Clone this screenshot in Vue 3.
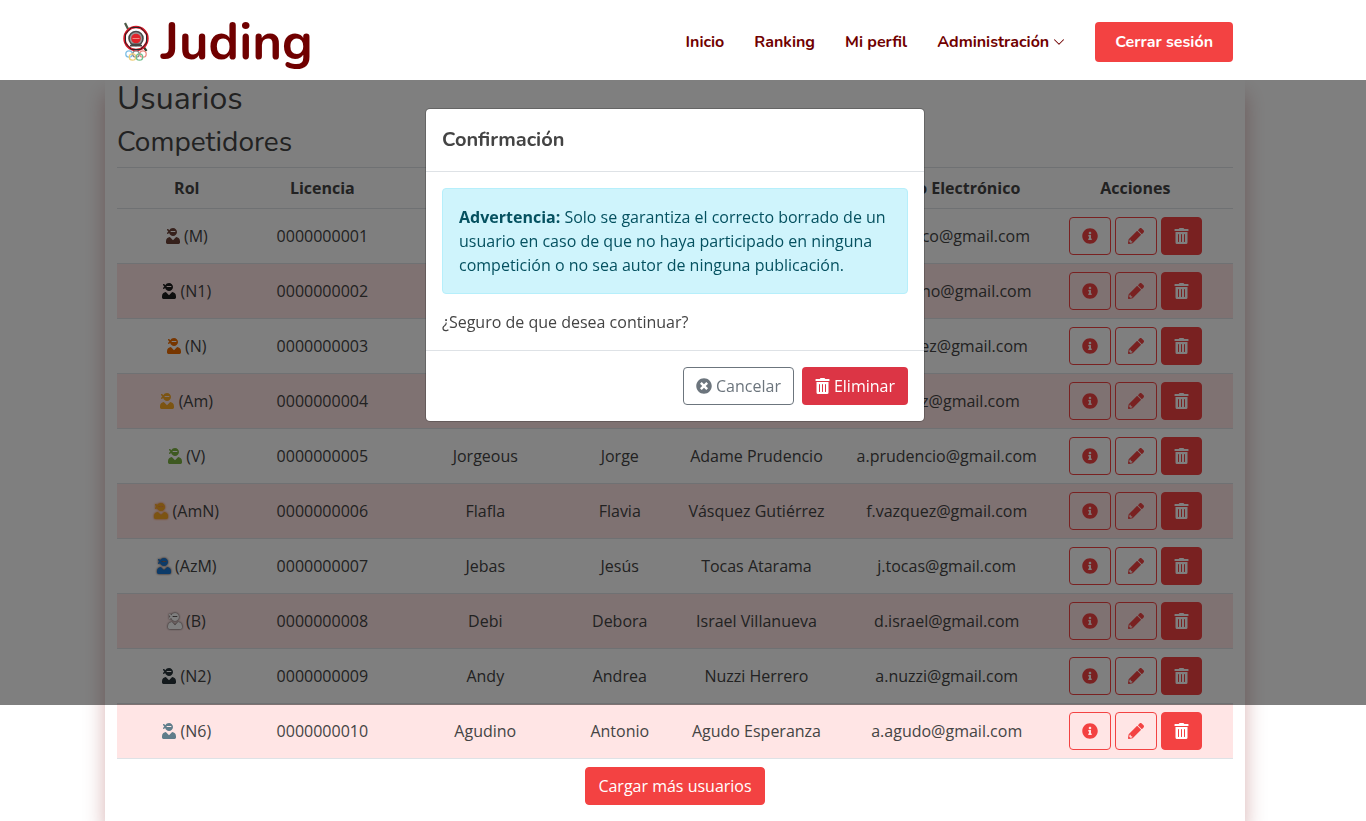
<script setup>
const icons = {
  ninja: {
    box: '0 0 448 512',
    d: 'M325.4 289.2L224 390.6 122.6 289.2C54 295.3 0 352.2 0 422.4v44.8C0 491.9 20.1 512 44.8 512h358.4c24.7 0 44.8-20.1 44.8-44.8v-44.8c0-70.2-54-127.1-122.6-133.2zM32 192c27.3 0 51.8-11.5 69.2-29.7 15.1 53.9 64 93.7 122.8 93.7 70.7 0 128-57.3 128-128S294.7 0 224 0c-50.4 0-93.6 29.4-114.5 71.8C92.1 47.8 64 32 32 32c0 33.4 17.1 62.8 43.1 80-26 17.2-43.1 46.6-43.1 80zm144-96h96c17.7 0 32 14.3 32 32H144c0-17.7 14.3-32 32-32z'
  },
  info: {
    box: '0 0 512 512',
    d: 'M256 8C119.043 8 8 119.083 8 256c0 136.997 111.043 248 248 248s248-111.003 248-248C504 119.083 392.957 8 256 8zm0 110c23.196 0 42 18.804 42 42s-18.804 42-42 42-42-18.804-42-42 18.804-42 42-42zm56 254c0 6.627-5.373 12-12 12h-88c-6.627 0-12-5.373-12-12v-24c0-6.627 5.373-12 12-12h12v-64h-12c-6.627 0-12-5.373-12-12v-24c0-6.627 5.373-12 12-12h64c6.627 0 12 5.373 12 12v100h12c6.627 0 12 5.373 12 12v24z'
  },
  pencil: {
    box: '0 0 512 512',
    d: 'M497.9 142.1l-46.1 46.1c-4.7 4.7-12.3 4.7-17 0l-111-111c-4.7-4.7-4.7-12.3 0-17l46.1-46.1c18.7-18.7 49.1-18.7 67.9 0l60.1 60.1c18.8 18.7 18.8 49.1 0 67.9zM284.2 99.8L21.6 362.4.4 483.9c-2.9 16.4 11.4 30.6 27.8 27.8l121.5-21.3 262.6-262.6c4.7-4.7 4.7-12.3 0-17l-111-111c-4.8-4.7-12.4-4.7-17.1 0zM88 424h48v36.3l-64.5 11.3-31.1-31.1L51.7 376H88v48z'
  },
  trash: {
    box: '0 0 448 512',
    d: 'M32 464a48 48 0 0 0 48 48h288a48 48 0 0 0 48-48V128H32zm272-256a16 16 0 0 1 32 0v224a16 16 0 0 1-32 0zm-96 0a16 16 0 0 1 32 0v224a16 16 0 0 1-32 0zm-96 0a16 16 0 0 1 32 0v224a16 16 0 0 1-32 0zM432 32H312l-9.4-18.7A24 24 0 0 0 281.1 0H166.8a23.72 23.72 0 0 0-21.4 13.3L136 32H16A16 16 0 0 0 0 48v32a16 16 0 0 0 16 16h416a16 16 0 0 0 16-16V48a16 16 0 0 0-16-16z'
  },
  cancel: {
    box: '0 0 512 512',
    d: 'M256 8C119 8 8 119 8 256s111 248 248 248 248-111 248-248S393 8 256 8zm121.6 313.1c4.7 4.7 4.7 12.3 0 17L338 377.6c-4.7 4.7-12.3 4.7-17 0L256 312l-65.1 65.6c-4.7 4.7-12.3 4.7-17 0L134.4 338c-4.7-4.7-4.7-12.3 0-17l65.6-65-65.6-65.1c-4.7-4.7-4.7-12.3 0-17l39.6-39.6c4.7-4.7 12.3-4.7 17 0l65 65.7 65.1-65.6c4.7-4.7 12.3-4.7 17 0l39.6 39.6c4.7 4.7 4.7 12.3 0 17L312 256l65.6 65.1z'
  }
}

const columns = ['Rol', 'Licencia', 'Apodo', 'Nombre', 'Apellidos', 'Correo Electrónico', 'Acciones']

const users = [
  { belt: 'brown', role: 'M', license: '0000000001', nick: 'Fran', name: 'Ana', surname: 'Pacheco Ruiz', email: 'a.pacheco@gmail.com' },
  { belt: 'black', role: 'N1', license: '0000000002', nick: 'Lucho', name: 'Mario', surname: 'Moreno Gil', email: 'm.moreno@gmail.com' },
  { belt: 'orange', role: 'N', license: '0000000003', nick: 'Albi', name: 'Alba', surname: 'Jiménez Sanz', email: 'a.jimenez@gmail.com' },
  { belt: 'yellow', role: 'Am', license: '0000000004', nick: 'Alex', name: 'Alex', surname: 'Pérez Díaz', email: 'a.perez@gmail.com' },
  { belt: 'green', role: 'V', license: '0000000005', nick: 'Jorgeous', name: 'Jorge', surname: 'Adame Prudencio', email: 'a.prudencio@gmail.com' },
  { belt: 'yellow-orange', role: 'AmN', license: '0000000006', nick: 'Flafla', name: 'Flavia', surname: 'Vásquez Gutiérrez', email: 'f.vazquez@gmail.com' },
  { belt: 'blue-brown', role: 'AzM', license: '0000000007', nick: 'Jebas', name: 'Jesús', surname: 'Tocas Atarama', email: 'j.tocas@gmail.com' },
  { belt: 'white', role: 'B', license: '0000000008', nick: 'Debi', name: 'Debora', surname: 'Israel Villanueva', email: 'd.israel@gmail.com' },
  { belt: 'dark', role: 'N2', license: '0000000009', nick: 'Andy', name: 'Andrea', surname: 'Nuzzi Herrero', email: 'a.nuzzi@gmail.com' },
  { belt: 'steel', role: 'N6', license: '0000000010', nick: 'Agudino', name: 'Antonio', surname: 'Agudo Esperanza', email: 'a.agudo@gmail.com' }
]
</script>

<template>
  <div class="page">
    <header class="header">
      <div class="header-inner">
        <a class="brand" href="#">
          <svg class="emblem" viewBox="0 0 28 40" aria-hidden="true">
            <path d="M3 1l3 6" stroke="#4d5a48" stroke-width="2.2" />
            <path d="M21 24l3.500 5" stroke="#33402f" stroke-width="2.2" />
            <circle cx="14" cy="16.500" r="11.500" fill="#fff" stroke="#d01625" stroke-width="2.400" />
            <path d="M9.500 5.500h9l6 6.500v9l-6 6.500h-9L3.500 21v-9z" fill="none" stroke="#2b2426" stroke-width="1" />
            <circle cx="14" cy="16.500" r="7" fill="#999" stroke="#4a4a4a" stroke-width="1.600" />
            <circle cx="14" cy="16.500" r="4.800" fill="#e0242a" />
            <path d="M10.500 16.500h7" stroke="#f4877e" stroke-width="1" />
            <path d="M8 23l3-1.500h6l3 1.500v1.500H8z" fill="#444" />
            <g fill="none" stroke-width="1.300">
              <circle cx="7" cy="32" r="3.200" stroke="#7fbfe6" />
              <circle cx="14" cy="32" r="3.200" stroke="#8a8a8a" />
              <circle cx="21" cy="32" r="3.200" stroke="#ee8c84" />
              <circle cx="10.500" cy="35" r="3.200" stroke="#efcf7a" />
              <circle cx="17.500" cy="35" r="3.200" stroke="#6fbd8c" />
            </g>
          </svg>
          <span>Juding</span>
        </a>
        <nav class="nav">
          <a href="#">Inicio</a>
          <a href="#">Ranking</a>
          <a href="#">Mi perfil</a>
          <a href="#">
            Administración
            <svg class="chevron" viewBox="0 0 16 16" aria-hidden="true">
              <path d="M2 5l6 6 6-6" fill="none" stroke="currentColor" stroke-width="1.400" stroke-linecap="round" stroke-linejoin="round" />
            </svg>
          </a>
          <button class="logout" type="button">Cerrar sesión</button>
        </nav>
      </div>
    </header>

    <main class="card">
      <h1>Usuarios</h1>
      <h2>Competidores</h2>
      <table class="users">
        <thead>
          <tr>
            <th v-for="c in columns" :key="c" scope="col">{{ c }}</th>
          </tr>
        </thead>
        <tbody>
          <tr v-for="u in users" :key="u.license">
            <td>
              <svg class="icon ninja" :class="u.belt" :viewBox="icons.ninja.box" aria-hidden="true"><path :d="icons.ninja.d" /></svg>
              ({{ u.role }})
            </td>
            <td>{{ u.license }}</td>
            <td>{{ u.nick }}</td>
            <td>{{ u.name }}</td>
            <td>{{ u.surname }}</td>
            <td>{{ u.email }}</td>
            <td>
              <div class="actions">
                <button class="btn outline" type="button" aria-label="Información">
                  <svg class="icon" :viewBox="icons.info.box"><path :d="icons.info.d" /></svg>
                </button>
                <button class="btn outline" type="button" aria-label="Editar">
                  <svg class="icon" :viewBox="icons.pencil.box"><path fill-rule="evenodd" :d="icons.pencil.d" /></svg>
                </button>
                <button class="btn solid" type="button" aria-label="Eliminar">
                  <svg class="icon narrow" :viewBox="icons.trash.box"><path :d="icons.trash.d" /></svg>
                </button>
              </div>
            </td>
          </tr>
        </tbody>
      </table>
      <button class="btn solid more" type="button">Cargar más usuarios</button>
    </main>

    <div class="backdrop"></div>

    <div class="modal-layer">
      <section class="modal" role="dialog" aria-modal="true" aria-labelledby="modal-title">
        <div class="modal-header">
          <h5 id="modal-title">Confirmación</h5>
        </div>
        <div class="modal-body">
          <div class="alert" role="alert">
            <strong>Advertencia:</strong> Solo se garantiza el correcto borrado de un usuario en caso de que no haya participado en ninguna competición o no sea autor de ninguna publicación.
          </div>
          <p>¿Seguro de que desea continuar?</p>
        </div>
        <div class="modal-footer">
          <button class="btn secondary" type="button">
            <svg class="icon" :viewBox="icons.cancel.box" aria-hidden="true"><path :d="icons.cancel.d" /></svg>
            Cancelar
          </button>
          <button class="btn danger" type="button">
            <svg class="icon narrow" :viewBox="icons.trash.box" aria-hidden="true"><path :d="icons.trash.d" /></svg>
            Eliminar
          </button>
        </div>
      </section>
    </div>
  </div>
</template>

<style>
body {
  margin: 0;
  background: #fff;
}
</style>

<style scoped>
* {
  box-sizing: border-box;
}

.page {
  position: relative;
  display: flex;
  flex-direction: column;
  min-height: 100vh;
  padding-right: 16px;
  overflow: hidden;
  color: #444;
  font: 16px/24px "Open Sans", "Noto Sans", sans-serif;
}

a {
  color: inherit;
  text-decoration: none;
}

button {
  font: inherit;
  cursor: pointer;
}

.header {
  position: relative;
  z-index: 3;
  height: 80px;
  margin-right: -16px;
  padding: 4px 16px 0 0;
  background: #fff;
}

.header-inner {
  display: flex;
  align-items: center;
  justify-content: space-between;
  max-width: 1140px;
  height: 100%;
  margin: 0 auto;
  padding: 0 12px;
}

.brand {
  display: flex;
  align-items: center;
  gap: 11px;
  padding-left: 5px;
  color: #700000;
  font: 700 51px/60px Nunito, Lato, sans-serif;
}

.emblem {
  width: 28px;
  height: 40px;
}

.nav {
  display: flex;
  align-items: center;
  gap: 30px;
  color: #700000;
  font: 700 16px/24px Nunito, Lato, sans-serif;
}

.nav a {
  display: flex;
  align-items: center;
  gap: 4px;
}

.chevron {
  width: 12px;
  height: 12px;
}

.logout {
  height: 40px;
  padding: 0 20px;
  border: 0;
  border-radius: 4px;
  background: #f34242;
  color: #fff;
}

.card {
  flex: 1;
  display: flex;
  flex-direction: column;
  width: 100%;
  max-width: 1140px;
  margin: 0 auto;
  padding: 0 12px 16px;
  background: #fff;
  box-shadow: 0 14px 20px rgba(127, 0, 0, 0.3);
}

h1,
h2 {
  margin: 0 0 8px;
  color: #444;
  font: 400 32px/38px Nunito, Lato, sans-serif;
}

h2 {
  font-size: 28px;
  line-height: 33px;
}

.users {
  width: 100%;
  table-layout: fixed;
  border-collapse: collapse;
  border-top: 1px solid #dee2e6;
  text-align: center;
  white-space: nowrap;
}

th,
td {
  padding: 8px 0;
  border-bottom: 1px solid #dee2e6;
}

th {
  font-weight: 700;
}

th:nth-child(1) { width: 12.5%; }
th:nth-child(2) { width: 11.8%; }
th:nth-child(3) { width: 17.4%; }
th:nth-child(4) { width: 6.7%; }
th:nth-child(5) { width: 17.8%; }
th:nth-child(6) { width: 16.3%; }

tbody tr:nth-child(even) {
  background: #ffe5e5;
}

.icon {
  width: 16px;
  height: 16px;
  flex: none;
  fill: currentColor;
}

.icon.narrow {
  width: 15px;
}

.icon.ninja {
  width: 14px;
  overflow: visible;
  vertical-align: -2px;
}

.brown { color: #6d4238; }
.black { color: #1c1c1c; }
.orange { color: #ef6c00; }
.yellow { color: #f9a825; }
.green { color: #7cb342; }
.yellow-orange { color: #f9a825; filter: drop-shadow(0 0 1px #ef6c00); }
.blue-brown { color: #1976d2; filter: drop-shadow(0 0 1px #4e2a20); }
.white { color: #fff; filter: drop-shadow(0 0 1px #222); }
.dark { color: #263238; }
.steel { color: #607d8b; }

.actions {
  display: flex;
  justify-content: center;
  gap: 4px;
}

.btn {
  display: inline-flex;
  align-items: center;
  justify-content: center;
  gap: 4px;
  height: 38px;
  padding: 0 12px;
  border: 1px solid transparent;
  border-radius: 4px;
}

.outline {
  border-color: #f34242;
  background: transparent;
  color: #f34242;
}

.solid {
  border-color: #f34242;
  background: #f34242;
  color: #fff;
}

.more {
  align-self: center;
  margin-top: 8px;
}

.backdrop {
  position: fixed;
  z-index: 1;
  inset: 0 0 116px;
  background: rgba(0, 0, 0, 0.5);
}

.modal-layer {
  position: absolute;
  z-index: 2;
  top: 108px;
  left: 0;
  right: 16px;
}

.modal {
  max-width: 500px;
  margin: 0 auto;
  border: 1px solid rgba(0, 0, 0, 0.2);
  border-radius: 5px;
  background: #fff;
  background-clip: padding-box;
}

.modal-header {
  padding: 16px;
  border-bottom: 1px solid #dee2e6;
}

.modal-header h5 {
  margin: 0;
  font: 700 20px/30px Nunito, Lato, sans-serif;
}

.modal-body {
  padding: 16px;
}

.modal-body p {
  margin: 0;
}

.alert {
  margin-bottom: 16px;
  padding: 16px;
  border: 1px solid #b6effb;
  border-radius: 4px;
  background: #cff4fc;
  color: #055160;
}

.modal-footer {
  display: flex;
  justify-content: flex-end;
  gap: 8px;
  padding: 16px;
  border-top: 1px solid #dee2e6;
}

.secondary {
  border-color: #6c757d;
  background: #fff;
  color: #6c757d;
}

.danger {
  background: #dc3545;
  color: #fff;
}
</style>
